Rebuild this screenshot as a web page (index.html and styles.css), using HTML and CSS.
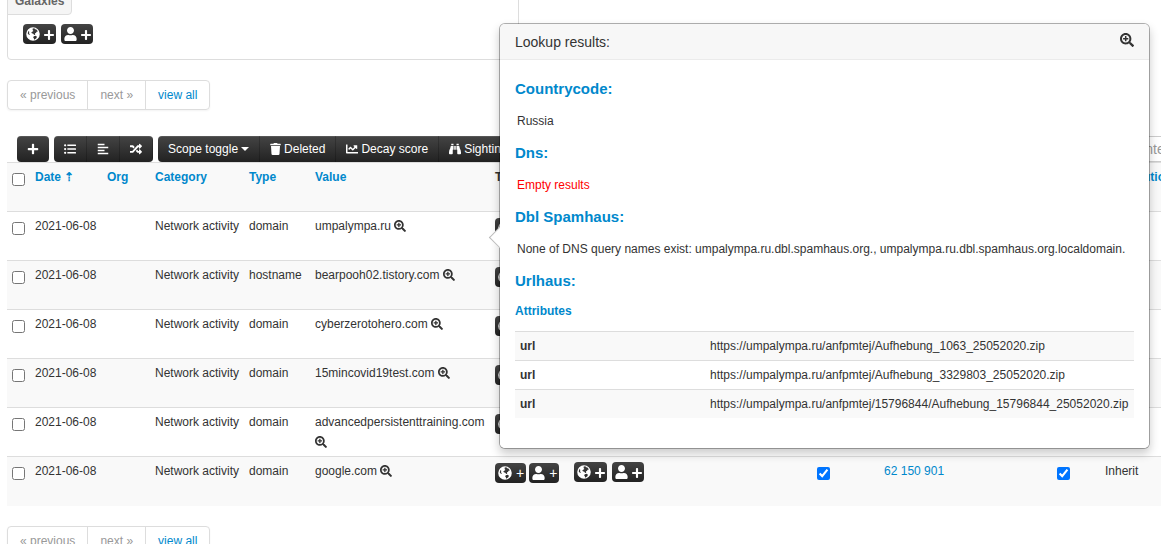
FILE: index.html
```html
<!DOCTYPE html>
<html lang="en">
<head>
    <meta charset="UTF-8">
    <title>Event attributes</title>
    <link rel="stylesheet" href="styles.css">
</head>
<body>
<svg class="sprite" aria-hidden="true">
    <symbol id="plus" viewBox="0 0 448 512"><path d="M416 208H272V64c0-17.67-14.33-32-32-32h-32c-17.67 0-32 14.33-32 32v144H32c-17.67 0-32 14.33-32 32v32c0 17.67 14.33 32 32 32h144v144c0 17.67 14.33 32 32 32h32c17.67 0 32-14.33 32-32V304h144c17.67 0 32-14.33 32-32v-32c0-17.67-14.33-32-32-32z"/></symbol>
    <symbol id="search-plus" viewBox="0 0 512 512"><path d="M304 192v32c0 6.6-5.4 12-12 12h-56v56c0 6.6-5.4 12-12 12h-32c-6.6 0-12-5.4-12-12v-56h-56c-6.6 0-12-5.4-12-12v-32c0-6.6 5.4-12 12-12h56v-56c0-6.6 5.4-12 12-12h32c6.6 0 12 5.4 12 12v56h56c6.6 0 12 5.4 12 12zm201 284.7L476.7 505c-9.4 9.4-24.6 9.4-33.9 0L343 405.3c-4.5-4.5-7-10.6-7-17V372c-35.3 27.6-79.7 44-128 44C93.1 416 0 322.9 0 208S93.1 0 208 0s208 93.1 208 208c0 48.3-16.4 92.7-44 128h16.3c6.4 0 12.5 2.5 17 7l99.7 99.7c9.3 9.4 9.3 24.6 0 34zM344 208c0-75.2-60.8-136-136-136S72 132.8 72 208s60.8 136 136 136 136-60.8 136-136z"/></symbol>
    <symbol id="user" viewBox="0 0 448 512"><path d="M224 256c70.7 0 128-57.3 128-128S294.7 0 224 0 96 57.3 96 128s57.3 128 128 128zm89.6 32h-16.7c-22.2 10.2-46.9 16-72.9 16s-50.6-5.8-72.9-16h-16.7C60.2 288 0 348.2 0 422.4V464c0 26.5 21.5 48 48 48h352c26.5 0 48-21.5 48-48v-41.6c0-74.2-60.2-134.4-134.4-134.4z"/></symbol>
    <symbol id="globe" viewBox="0 0 496 512"><path fill-rule="evenodd" d="M248 8a248 248 0 1 0 0 496 248 248 0 0 0 0-496zM238 58l54-8 42 30 50 22 42 62-46 6-24 48-36 12 8 52-34 8-46-52-34 4-30-38 36-34 42-24-28-36zM78 150l34 24-10 54 30 44-26 18-50-50zM280 334l62-12 44 24-8 52-48 44-34 22-18-50-26-38z"/></symbol>
    <symbol id="list-ul" viewBox="0 0 512 512"><path d="M48 48a48 48 0 1 0 0 96 48 48 0 0 0 0-96zm0 160a48 48 0 1 0 0 96 48 48 0 0 0 0-96zm0 160a48 48 0 1 0 0 96 48 48 0 0 0 0-96zM144 64h352a16 16 0 0 1 16 16v32a16 16 0 0 1-16 16H144zM144 224h352a16 16 0 0 1 16 16v32a16 16 0 0 1-16 16H144zM144 384h352a16 16 0 0 1 16 16v32a16 16 0 0 1-16 16H144z"/></symbol>
    <symbol id="align-left" viewBox="0 0 448 512"><path d="M0 32h288v64H0zM0 160h448v64H0zM0 288h288v64H0zM0 416h448v64H0z"/></symbol>
    <symbol id="random" viewBox="0 0 512 512"><path d="M504.971 359.029c9.373 9.373 9.373 24.569 0 33.941l-80 79.984c-15.01 15.01-40.971 4.49-40.971-16.971V416h-58.785a12.004 12.004 0 0 1-8.773-3.812l-70.556-75.596 53.333-57.143L352 336h32v-39.981c0-21.438 25.943-31.998 40.971-16.971l80 79.981zM12 176h84l52.781 56.551 53.333-57.143-70.556-75.596A11.999 11.999 0 0 0 122.785 96H12c-6.627 0-12 5.373-12 12v56c0 6.627 5.373 12 12 12zm372 0v39.984c0 21.46 25.961 31.98 40.971 16.971l80-79.984c9.373-9.373 9.373-24.569 0-33.941l-80-79.981C409.943 24.021 384 34.582 384 56.019V96h-58.785a12.004 12.004 0 0 0-8.773 3.812L96 336H12c-6.627 0-12 5.373-12 12v56c0 6.627 5.373 12 12 12h110.785c3.326 0 6.503-1.381 8.773-3.812L352 176h32z"/></symbol>
    <symbol id="trash" viewBox="0 0 448 512"><path d="M432 32H312l-9.4-18.7A24 24 0 0 0 281.1 0H166.8a23.72 23.72 0 0 0-21.4 13.3L136 32H16A16 16 0 0 0 0 48v32a16 16 0 0 0 16 16h416a16 16 0 0 0 16-16V48a16 16 0 0 0-16-16zM53.2 467a48 48 0 0 0 47.9 45h245.8a48 48 0 0 0 47.9-45L416 128H32z"/></symbol>
    <symbol id="chart-line" viewBox="0 0 512 512"><path d="M496 384H64V80c0-8.84-7.16-16-16-16H16C7.16 64 0 71.16 0 80v336c0 17.67 14.33 32 32 32h464c8.84 0 16-7.16 16-16v-32c0-8.84-7.16-16-16-16zM464 96H345.94c-21.38 0-32.09 25.85-16.97 40.97l32.4 32.4L288 242.75l-73.37-73.37c-12.5-12.5-32.76-12.5-45.25 0l-68.69 68.69c-6.25 6.25-6.25 16.38 0 22.63l22.62 22.62c6.25 6.25 16.38 6.25 22.63 0L192 237.25l73.37 73.37c12.5 12.5 32.76 12.5 45.25 0l96-96 32.4 32.4c15.12 15.12 40.97 4.41 40.97-16.97V112c.01-8.84-7.15-16-15.99-16z"/></symbol>
    <symbol id="binoculars" viewBox="0 0 512 512"><path d="M416 48c0-8.84-7.16-16-16-16h-64c-8.84 0-16 7.16-16 16v48h96V48zM63.91 159.99C61.4 253.84 3.46 274.22 0 404v44c0 17.67 14.33 32 32 32h96c17.67 0 32-14.33 32-32V288h32V128H95.84c-17.63 0-31.45 14.37-31.93 31.99zm384.18 0c-.48-17.62-14.3-31.99-31.93-31.99H320v160h32v160c0 17.67 14.33 32 32 32h96c17.67 0 32-14.33 32-32v-44c-3.46-129.78-61.4-150.16-63.91-244.01zM176 32h-64c-8.84 0-16 7.16-16 16v48h96V48c0-8.84-7.16-16-16-16zm48 256h64V128h-64v160z"/></symbol>
</svg>

<div class="page">
    <section class="galaxies">
        <h2 class="galaxies-title">Galaxies</h2>
        <div class="galaxies-body">
            <button class="tag-btn" aria-label="Add galaxy"><svg class="icon"><use href="#globe"/></svg><svg class="icon small"><use href="#plus"/></svg></button>
            <button class="tag-btn" aria-label="Add local galaxy"><svg class="icon narrow"><use href="#user"/></svg><svg class="icon small"><use href="#plus"/></svg></button>
        </div>
    </section>

    <nav class="pagination">
        <a class="disabled" href="#">« previous</a>
        <a class="disabled" href="#">next »</a>
        <a href="#">view all</a>
    </nav>

    <div class="toolbar">
        <div class="btn-group">
            <button aria-label="Add attribute"><svg class="icon"><use href="#plus"/></svg></button>
        </div>
        <div class="btn-group">
            <button aria-label="List view"><svg class="icon"><use href="#list-ul"/></svg></button>
            <button aria-label="Tree view"><svg class="icon"><use href="#align-left"/></svg></button>
            <button aria-label="Shuffle"><svg class="icon"><use href="#random"/></svg></button>
        </div>
        <div class="btn-group">
            <button>Scope toggle<span class="caret"></span></button>
            <button><svg class="icon trash"><use href="#trash"/></svg>Deleted</button>
            <button><svg class="icon"><use href="#chart-line"/></svg>Decay score</button>
            <button><svg class="icon"><use href="#binoculars"/></svg>Sightings</button>
        </div>
        <input class="search" type="text" aria-label="Search value" placeholder="Enter value to search">
    </div>

    <table class="attributes">
        <colgroup>
            <col class="c-check"><col class="c-date"><col class="c-org"><col class="c-category"><col class="c-type"><col class="c-value"><col class="c-tags"><col class="c-galaxies"><col class="c-correlate"><col class="c-related"><col class="c-ids"><col class="c-dist">
        </colgroup>
        <thead>
            <tr>
                <th><input type="checkbox" aria-label="Select all"></th>
                <th><a href="#">Date ⇡</a></th>
                <th><a href="#">Org</a></th>
                <th><a href="#">Category</a></th>
                <th><a href="#">Type</a></th>
                <th><a href="#">Value</a></th>
                <th>Tags</th>
                <th>Galaxies</th>
                <th>Correlate</th>
                <th>Related Events</th>
                <th><a href="#">IDS</a></th>
                <th><a href="#">Distribution</a></th>
            </tr>
        </thead>
        <tbody id="rows"></tbody>
    </table>

    <nav class="pagination">
        <a class="disabled" href="#">« previous</a>
        <a class="disabled" href="#">next »</a>
        <a href="#">view all</a>
    </nav>
</div>

<div class="popover">
    <div class="popover-title">
        <span>Lookup results:</span>
        <button class="plain" aria-label="Enlarge"><svg class="icon large"><use href="#search-plus"/></svg></button>
    </div>
    <div class="popover-body">
        <h3>Countrycode:</h3>
        <p>Russia</p>
        <h3>Dns:</h3>
        <p class="empty">Empty results</p>
        <h3>Dbl Spamhaus:</h3>
        <p>None of DNS query names exist: umpalympa.ru.dbl.spamhaus.org., umpalympa.ru.dbl.spamhaus.org.localdomain.</p>
        <h3>Urlhaus:</h3>
        <h4>Attributes</h4>
        <table class="lookup">
            <tr><th>url</th><td>https://umpalympa.ru/anfpmtej/Aufhebung_1063_25052020.zip</td></tr>
            <tr><th>url</th><td>https://umpalympa.ru/anfpmtej/Aufhebung_3329803_25052020.zip</td></tr>
            <tr><th>url</th><td>https://umpalympa.ru/anfpmtej/15796844/Aufhebung_15796844_25052020.zip</td></tr>
        </table>
    </div>
</div>

<script src="script.js"></script>
</body>
</html>
```
FILE: styles.css
```css
*{box-sizing:border-box;}
body{margin:0;overflow:hidden;font:12px/20px "Liberation Sans",Arial,sans-serif;color:#333;background:#fff;}
a{color:#0088cc;text-decoration:none;}
button,input{font-family:inherit;}
button{cursor:pointer;}
input[type=checkbox]{display:block;width:13px;height:13px;margin:6px 0 0;}
.sprite{display:none;}
.icon{width:12px;height:12px;fill:currentColor;flex:none;}
.icon.trash{width:11px;}
.icon.large{width:14px;height:14px;}

.page{min-width:1190px;padding:0 7px;margin-top:-13px;}

/* galaxies box */
.galaxies{width:512px;border:1px solid #ddd;border-radius:4px;}
.galaxies-title{display:block;width:max-content;margin:-1px 0 0 -1px;padding:3px 7px;border:1px solid #ddd;border-radius:4px 0 4px 0;background:#f5f5f5;color:#666;font-size:12px;line-height:20px;}
.galaxies-body{display:flex;gap:5px;padding:9px 15px 15px;}
.tag-btn{display:inline-flex;align-items:center;justify-content:space-between;gap:4px;height:20px;padding:0 2px 0 3px;border:0;border-radius:4px;background:linear-gradient(#444,#222);color:#fff;font-size:14px;}
.tag-btn .icon{width:14px;height:14px;}
.tag-btn .icon.narrow{width:13px;}
.tag-btn .icon.small{width:10px;height:12px;margin-top:2px;}

/* pagination */
.pagination{display:flex;width:max-content;margin:20px 0;border:1px solid #ddd;border-radius:4px;box-shadow:0 1px 2px rgba(0,0,0,.05);}
.pagination a{padding:4px 12px;border-left:1px solid #ddd;}
.pagination a:first-child{border-left:0;}
.pagination .disabled{color:#999;}

/* toolbar */
.toolbar{display:flex;gap:5px;margin-top:26px;padding-left:10px;}
.btn-group{display:flex;border-radius:4px;overflow:hidden;background:linear-gradient(#444,#222);box-shadow:inset 0 1px 0 rgba(255,255,255,.1);}
.btn-group button{display:flex;align-items:center;gap:3px;height:26px;padding:0 10px;border:0;border-right:1px solid rgba(0,0,0,.2);background:none;color:#fff;font-size:12px;white-space:nowrap;}
.btn-group button:only-child{border-right:0;}
.caret{border:4px solid transparent;border-top-color:#fff;border-bottom:0;}
.search{width:180px;height:26px;margin-left:auto;margin-right:-126px;padding:0 6px;border:1px solid #ccc;font-size:14px;}
.search::placeholder{color:#999;}

/* attribute list */
.attributes{width:100%;table-layout:fixed;border-collapse:collapse;}
.attributes th,.attributes td{height:49px;padding:4px 5px;border-top:1px solid #ddd;text-align:left;vertical-align:top;}
.attributes thead tr,.attributes tbody tr:nth-child(even){background:#f9f9f9;}
.attributes tr>:nth-child(-n+5){white-space:nowrap;}
.attributes .plain .icon{vertical-align:-2px;}
.c-check{width:23px;}
.c-date{width:72px;}
.c-org{width:48px;}
.c-category{width:94px;}
.c-type{width:66px;}
.c-value{width:180px;}
.c-tags{width:79px;}
.c-galaxies{width:243px;}
.c-correlate{width:67px;}
.c-related{width:173px;}
.c-ids{width:48px;}
.tags{display:flex;gap:3px;padding-top:2px;}
.tags.wide{gap:5px;padding-top:1px;}
.plain{padding:0;border:0;background:none;color:inherit;}

/* lookup popover, floats over the attribute list */
.popover{position:absolute;left:499px;right:11px;top:23px;border:1px solid rgba(0,0,0,.3);border-radius:6px;background:#fff;background-clip:padding-box;box-shadow:0 5px 10px rgba(0,0,0,.2);font-size:12px;}
.popover::before{content:"";position:absolute;left:-8px;top:206px;width:14px;height:14px;border:1px solid #bbb;border-width:0 0 1px 1px;background:#fff;transform:rotate(45deg);}
.popover-title{display:flex;justify-content:space-between;align-items:flex-start;padding:9px 15px 7px;border-bottom:1px solid #ebebeb;border-radius:5px 5px 0 0;background:#f7f7f7;font-size:14px;line-height:19px;}
.popover-body{position:relative;padding:7px 15px 30px;background:#fff;border-radius:0 0 5px 5px;}
.popover h3{margin:7px 0;color:#0088cc;font-size:15px;line-height:30px;}
.popover h4{margin:0 0 12px;color:#0088cc;font-size:12px;line-height:16px;}
.popover p{margin:0 2px;}
.popover .empty{color:#f00;}
.lookup{width:100%;border-collapse:collapse;}
.lookup th,.lookup td{padding:4px 5px;border-top:1px solid #ddd;text-align:left;}
.lookup th{width:190px;}
.lookup tr:nth-child(odd){background:#f9f9f9;}
```
FILE: script.js
```js
var attributes=[
    ['domain','umpalympa.ru'],
    ['hostname','bearpooh02.tistory.com'],
    ['domain','cyberzerotohero.com'],
    ['domain','15mincovid19test.com'],
    ['domain','advancedpersistenttraining.com'],
    ['domain','google.com','62 150 901']
];

function icon(name,cls){
    return '<svg class="icon '+(cls||'')+'"><use href="#'+name+'"/></svg>';
}

// text plus is used for tags, icon plus for galaxies
function addButtons(plus){
    return '<button class="tag-btn" aria-label="Add">'+icon('globe')+plus+'</button>'+
        '<button class="tag-btn" aria-label="Add local">'+icon('user','narrow')+plus+'</button>';
}

document.getElementById('rows').innerHTML=attributes.map(function(a){
    var related=(a[2]||'').split(' ').map(function(id){
        return '<a href="#">'+id+'</a>';
    }).join(' ');
    return '<tr><td><input type="checkbox" aria-label="Select '+a[1]+'"></td>'+
        '<td>2021-06-08</td><td></td><td>Network activity</td>'+
        '<td>'+a[0]+'</td>'+
        '<td>'+a[1]+' <button class="plain" aria-label="Look up">'+icon('search-plus')+'</button></td>'+
        '<td><div class="tags">'+addButtons('<span>+</span>')+'</div></td>'+
        '<td><div class="tags wide">'+addButtons(icon('plus','small'))+'</div></td>'+
        '<td><input type="checkbox" aria-label="Correlate" checked></td>'+
        '<td>'+related+'</td>'+
        '<td><input type="checkbox" aria-label="IDS" checked></td>'+
        '<td>Inherit</td></tr>';
}).join('');
```
